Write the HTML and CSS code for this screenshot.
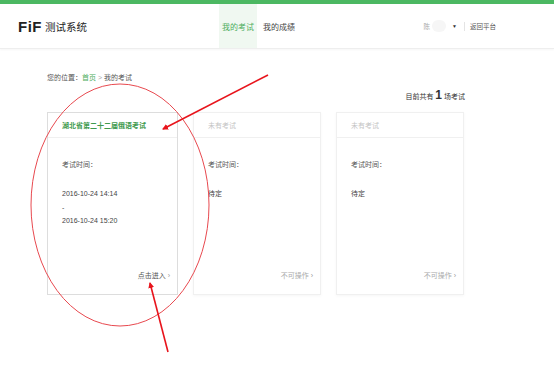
FILE: index.html
```html
<!DOCTYPE html>
<html lang="zh-CN">
<head>
  <meta charset="UTF-8" />
  <meta name="viewport" content="width=device-width, initial-scale=1.0" />
  <title>FiF 测试系统</title>
  <link rel="stylesheet" href="styles.css">
</head>
<body>
  <div class="topline"></div>
  <header class="header">
    <div class="logo"><span class="logo-en">FiF</span> 测试系统</div>
    <nav class="nav">
      <a class="nav-item active">我的考试</a>
      <a class="nav-item">我的成绩</a>
    </nav>
    <div class="user">
      <span class="user-name">陈<span class="blur"></span></span>
      <span class="caret">▼</span>
      <span class="sep"></span>
      <a class="back">返回平台</a>
    </div>
  </header>

  <main class="main">
    <div class="crumb">您的位置：<a class="crumb-link">首页</a> <span class="crumb-sep">&gt;</span> 我的考试</div>
    <div class="count">目前共有 <b>1</b> 场考试</div>

    <div class="cards">
      <div class="card current">
        <div class="card-head">湖北省第二十二届俄语考试</div>
        <div class="card-body">
          <div class="label">考试时间：</div>
          <div class="time">2016-10-24 14:14<br>-<br>2016-10-24 15:20</div>
        </div>
        <div class="card-foot">点击进入 <span class="chev">›</span></div>
      </div>
      <div class="card empty">
        <div class="card-head">未有考试</div>
        <div class="card-body">
          <div class="label">考试时间：</div>
          <div class="time">待定</div>
        </div>
        <div class="card-foot">不可操作 <span class="chev">›</span></div>
      </div>
      <div class="card empty">
        <div class="card-head">未有考试</div>
        <div class="card-body">
          <div class="label">考试时间：</div>
          <div class="time">待定</div>
        </div>
        <div class="card-foot">不可操作 <span class="chev">›</span></div>
      </div>
    </div>
  </main>

  <svg class="marks" width="554" height="386" viewBox="0 0 554 386">
    <defs>
      <marker id="head" markerWidth="6" markerHeight="6" refX="5" refY="3" orient="auto" markerUnits="userSpaceOnUse">
        <path d="M0 0 L6 3 L0 6 Z" fill="#e8141c"/>
      </marker>
    </defs>
    <ellipse cx="120" cy="205" rx="89" ry="121" fill="none" stroke="#e8494f" stroke-width="1"/>
    <line x1="268" y1="75" x2="163" y2="129" stroke="#e8141c" stroke-width="1.6" marker-end="url(#head)"/>
    <line x1="168" y1="352" x2="150" y2="283" stroke="#e8141c" stroke-width="1.6" marker-end="url(#head)"/>
  </svg>
</body>
</html>
```

FILE: styles.css
```css
body {
  margin: 0;
  width: 554px;
  height: 386px;
  position: relative;
  overflow: hidden;
  background-color: #ffffff;
  font-family: 'Liberation Sans', 'Noto Sans CJK SC', sans-serif;
  color: #444444;
}
a {
  text-decoration: none;
  color: inherit;
}
.topline {
  height: 4px;
  background-color: #4cb862;
}
.header {
  height: 44px;
  display: flex;
  align-items: stretch;
  border-bottom: 1px solid #eeeeee;
  box-shadow: 0 1px 2px rgba(0, 0, 0, 0.04);
}
.logo {
  display: flex;
  align-items: center;
  padding-left: 18px;
  width: 201px;
  font-size: 10.5px;
  color: #222222;
}
.logo-en {
  font-size: 15px;
  font-weight: bold;
  letter-spacing: 0.5px;
  margin-right: 3px;
}
.nav {
  display: flex;
}
.nav-item {
  display: flex;
  align-items: center;
  padding: 0 3px;
  margin-right: 3px;
  font-size: 8px;
  color: #444444;
}
.nav-item.active {
  background-color: #f0f8f1;
  color: #4cad5c;
}
.user {
  margin-left: auto;
  margin-right: 58px;
  display: flex;
  align-items: center;
  font-size: 6.5px;
  color: #555555;
}
.user-name {
  color: #aaaaaa;
  display: flex;
  align-items: center;
}
.blur {
  display: inline-block;
  width: 14px;
  height: 12px;
  margin-left: 2px;
  background-color: #f6f6f6;
  border-radius: 6px;
}
.caret {
  font-size: 5px;
  margin-left: 6px;
  color: #333333;
}
.sep {
  width: 1px;
  height: 9px;
  background-color: #e4e4e4;
  margin: 0 5px 0 7px;
}
.main {
  padding: 24px 0 0 47px;
  width: 418px;
}
.crumb {
  font-size: 7px;
  line-height: 10px;
  color: #555555;
}
.crumb-link {
  color: #4cad5c;
}
.crumb-sep {
  color: #aaaaaa;
}
.count {
  text-align: right;
  font-size: 7px;
  line-height: 14px;
  margin-top: 5px;
  color: #333333;
}
.count b {
  font-size: 12px;
  font-weight: bold;
}
.cards {
  display: flex;
  gap: 15px;
  margin-top: 8px;
}
.card {
  width: 129px;
  height: 181px;
  border: 1px solid #dddddd;
  display: flex;
  flex-direction: column;
  font-size: 7px;
}
.card.empty {
  width: 126px;
  border-color: #f0f0f0;
  box-shadow: 0 1px 3px rgba(0, 0, 0, 0.04);
}
.card-head {
  height: 24px;
  line-height: 26px;
  padding-left: 14px;
  border-bottom: 1px solid #f0f0f0;
  font-size: 7px;
}
.current .card-head {
  color: #3f9a4e;
  font-weight: bold;
}
.empty .card-head {
  color: #c4c4c4;
}
.card-body {
  padding: 21px 0 0 14px;
}
.label {
  font-size: 7px;
  line-height: 12px;
  color: #555555;
}
.time {
  margin-top: 16px;
  font-size: 7px;
  line-height: 13.5px;
  color: #444444;
}
.card-foot {
  margin-top: auto;
  margin-bottom: 14px;
  text-align: right;
  padding-right: 7px;
  font-size: 7px;
  color: #555555;
}
.empty .card-foot {
  color: #aaaaaa;
}
.chev {
  color: #999999;
}
.marks {
  position: absolute;
  left: 0;
  top: 0;
  pointer-events: none;
}
```
